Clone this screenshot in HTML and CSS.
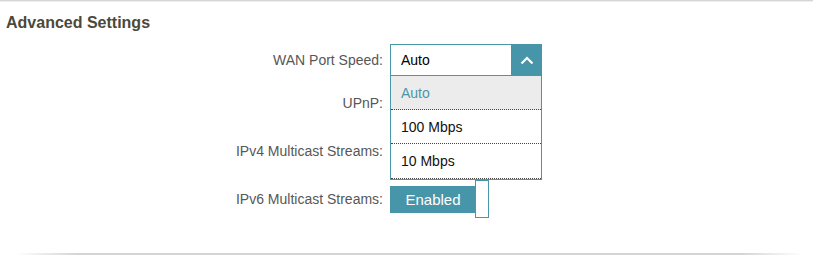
FILE: index.html
```html
<!DOCTYPE html>
<html lang="en">
<head>
    <meta charset="UTF-8">
    <title>Advanced Settings</title>
    <link rel="stylesheet" href="styles.css">
</head>
<body>
    <div class="panel">
        <h2 class="title">Advanced Settings</h2>
        <div class="form">
            <div class="row row-first">
                <label class="label">WAN Port Speed:</label>
                <div class="select">
                    <span class="select-value">Auto</span>
                    <span class="select-btn">
                        <svg width="14" height="9" viewBox="0 0 14 9"><path d="M1.5 7.5 L7 2 L12.5 7.5" fill="none" stroke="#fff" stroke-width="2.2"/></svg>
                    </span>
                    <ul class="options">
                        <li class="option selected">Auto</li>
                        <li class="option">100 Mbps</li>
                        <li class="option">10 Mbps</li>
                    </ul>
                </div>
            </div>
            <!-- these two toggles sit under the open list -->
            <div class="row">
                <label class="label">UPnP:</label>
                <div class="toggle covered"><span class="track">Enabled</span><span class="knob"></span></div>
            </div>
            <div class="row">
                <label class="label">IPv4 Multicast Streams:</label>
                <div class="toggle covered"><span class="track">Enabled</span><span class="knob"></span></div>
            </div>
            <div class="row">
                <label class="label">IPv6 Multicast Streams:</label>
                <div class="toggle"><span class="track">Enabled</span><span class="knob"></span></div>
            </div>
        </div>
        <div class="bottom-line"></div>
    </div>
</body>
</html>
```

FILE: styles.css
```css
body {
    margin: 0;
    padding: 0;
    background: #fff;
    font-family: "Liberation Sans", Arial, sans-serif;
}

.panel {
    width: 813px;
    height: 256px;
    border-top: 1px solid #d6d6d6;
    box-shadow: inset 0 1px 0 #efefef;
    box-sizing: border-box;
    position: relative;
}

.title {
    margin: 13px 0 0 6px;
    font-size: 16px;
    font-weight: bold;
    color: #4b493b;
    line-height: 18px;
}

.form {
    margin-top: 12px;
    display: flex;
    flex-direction: column;
    gap: 10px;
}

.row {
    display: flex;
    align-items: center;
    height: 38px;
}

.row-first {
    height: 32px;
    margin-bottom: -2px;
}

.label {
    width: 383px;
    text-align: right;
    font-size: 14px;
    color: #575757;
    padding-right: 7px;
    box-sizing: content-box;
}

.select {
    position: relative;
    width: 152px;
    height: 32px;
    border: 1px solid #4a97aa;
    box-sizing: border-box;
    display: flex;
    align-items: center;
    z-index: 2;
}

.select-value {
    flex: 1;
    padding-left: 10px;
    font-size: 14px;
    color: #000;
}

.select-btn {
    width: 31px;
    height: 32px;
    margin: -1px -1px -1px 0;
    background: #4795a9;
    display: flex;
    align-items: center;
    justify-content: center;
}

.options {
    position: absolute;
    top: 31px;
    left: -1px;
    width: 152px;
    margin: 0;
    padding: 0;
    list-style: none;
    border: 1px solid #4a97aa;
    border-top: none;
    box-sizing: border-box;
    background: #fff;
}

.option {
    height: 34px;
    line-height: 35px;
    padding-left: 10px;
    font-size: 14px;
    color: #111;
    border-bottom: 1px dotted #444;
    box-sizing: border-box;
}

.option:last-child {
    height: 35px;
}

.option.selected {
    background: #ececec;
    color: #4a97aa;
}

.toggle {
    display: flex;
    align-items: center;
    height: 38px;
}

.toggle.covered {
    visibility: hidden;
}

.track {
    width: 86px;
    height: 27px;
    line-height: 27px;
    background: #4795a9;
    color: #fff;
    font-size: 15px;
    text-align: center;
}

.knob {
    width: 14px;
    height: 38px;
    margin-left: -1px;
    border: 1px solid #4a97aa;
    box-sizing: border-box;
    background: #fff;
}

.bottom-line {
    position: absolute;
    left: 15px;
    right: 10px;
    bottom: 1px;
    height: 2px;
    background: linear-gradient(to right, rgba(210,210,210,0), #d4d4d4 8%, #d4d4d4 92%, rgba(210,210,210,0));
}
```
